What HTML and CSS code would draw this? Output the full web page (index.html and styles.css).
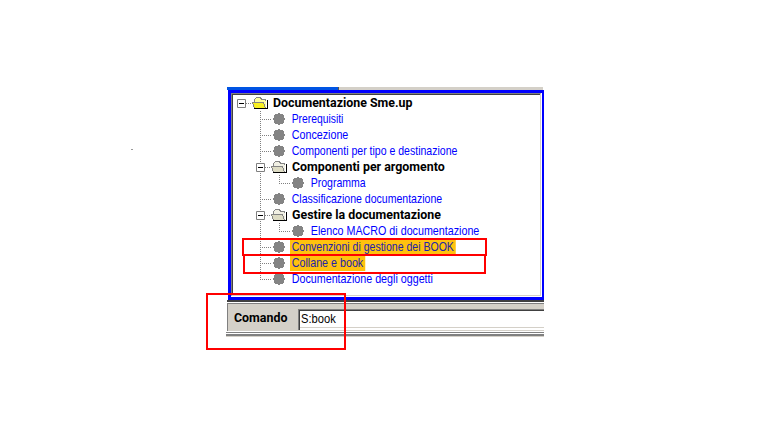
FILE: index.html
```
<!DOCTYPE html>
<html lang="it">
<head>
<meta charset="utf-8">
<title>Documentazione Sme.up</title>
<link rel="stylesheet" href="styles.css">
</head>
<body>
<svg class="defs" width="0" height="0" aria-hidden="true">
  <defs>
    <symbol id="folder-root" viewBox="0 0 16 14">
      <path d="M2 6V3L4 1H8L9 3H14V12H4Z" fill="#ffff9c"/>
      <path d="M0 6H12L14 12H3Z" fill="#f8f020"/>
      <path d="M2.5 6V3.5L4.5 1.5H8.5L9.5 3.5H13.5V5M0 6.5H11.5L13.5 12M.5 7L2.5 12" fill="none" stroke="#848484"/>
      <path d="M2 12.5H16M15 4V13" fill="none" stroke="#000"/>
    </symbol>
    <symbol id="folder" viewBox="0 0 16 14">
      <path d="M2 6V3L4 1H8L9 3H14V12H4Z" fill="#f1f0e4"/>
      <path d="M0 6H12L14 12H3Z" fill="#dedcc4"/>
      <path d="M2.5 6V3.5L4.5 1.5H8.5L9.5 3.5H13.5V5M0 6.5H11.5L13.5 12M.5 7L2.5 12" fill="none" stroke="#848484"/>
      <path d="M2 12.5H16M15 4V13" fill="none" stroke="#000"/>
    </symbol>
    <symbol id="dot" viewBox="0 0 12 12"><path d="M4 1H5V0H7V1H10V2H11V5H12V7H11V10H10V11H7V12H5V11H2V10H1V7H0V5H1V2H2V1Z" fill="#848484"/></symbol>
    <symbol id="minus" viewBox="0 0 9 9"><path d="M.5 .5H8.5V8.5H.5Z" fill="#fff" stroke="#808080"/><path d="M2 4.5H7" stroke="#000"/></symbol>
  </defs>
</svg>
<main class="window">
  <div class="strip"><span class="strip-active"></span></div>
  <section class="frame">
    <ul class="tree">
      <li class="row root"><svg class="minus"><use href="#minus"/></svg><i class="dots"></i><svg class="folder"><use href="#folder-root"/></svg><b>Documentazione Sme.up</b></li>
      <li class="row"><i class="branch"></i><svg class="dot"><use href="#dot"/></svg><span class="tight">Prerequisiti</span></li>
      <li class="row"><i class="branch"></i><svg class="dot"><use href="#dot"/></svg><span>Concezione</span></li>
      <li class="row"><i class="branch"></i><svg class="dot"><use href="#dot"/></svg><span class="long">Componenti per tipo e destinazione</span></li>
      <li class="row group"><svg class="minus"><use href="#minus"/></svg><i class="dots"></i><svg class="folder"><use href="#folder"/></svg><b>Componenti per argomento</b></li>
      <li class="row child"><i class="line"></i><i class="branch end"></i><svg class="dot"><use href="#dot"/></svg><span class="long">Programma</span></li>
      <li class="row"><i class="branch"></i><svg class="dot"><use href="#dot"/></svg><span class="long">Classificazione documentazione</span></li>
      <li class="row group"><svg class="minus"><use href="#minus"/></svg><i class="dots"></i><svg class="folder"><use href="#folder"/></svg><b>Gestire la documentazione</b></li>
      <li class="row child"><i class="line"></i><i class="branch end"></i><svg class="dot"><use href="#dot"/></svg><span>Elenco MACRO di documentazione</span></li>
      <li class="row"><i class="branch"></i><svg class="dot"><use href="#dot"/></svg><span class="marked long">Convenzioni di gestione dei BOOK</span></li>
      <li class="row"><i class="branch"></i><svg class="dot"><use href="#dot"/></svg><span class="marked">Collane e book</span></li>
      <li class="row"><i class="branch end"></i><svg class="dot"><use href="#dot"/></svg><span>Documentazione degli oggetti</span></li>
    </ul>
  </section>
  <div class="frame-shadow"></div>
  <section class="command">
    <label class="command-label">Comando</label>
    <div class="command-input"><span>S:book</span></div>
  </section>
  <div class="footer-edge"></div>
</main>
<div class="callout callout-conventions"></div>
<div class="callout callout-books"></div>
<div class="callout callout-command"></div>
<div class="speck"></div>
</body>
</html>
```
FILE: styles.css
```
* { box-sizing: border-box; }
body { margin: 0; width: 771px; height: 424px; overflow: hidden; background: #fff; color: #000; font: 12.4px/16px "Liberation Sans", sans-serif; }
.defs { position: absolute; }
.window { width: 318px; margin: 87px 0 0 226px; }
.strip { height: 3px; margin: 0 1px; background: #d4d0c8; }
.strip-active { display: block; width: 112px; height: 3px; background: #0054e3; border-right: 1px solid #555; }
.frame { margin-left: 2px; height: 210px; border: 3px solid #00f; border-right-width: 2px; padding: 0 1px 1px 0; }
.tree { margin: 0; padding: 1px 0 0 4px; height: 203px; list-style: none; border: 1px solid #d4d0c8; border-top-color: #808080; border-left-color: #808080; box-shadow: inset 1px 1px #404040; }
.row { display: flex; align-items: center; height: 16px; padding-left: 24px; white-space: nowrap; color: #00f; }
.row > * { flex: none; }
.row b { color: #000; font-family: Roboto, sans-serif; font-weight: 700; font-size: 12.4px; }
.row span { height: 16px; padding: 0 2px; transform: scaleX(.865); transform-origin: 0 0; }
.row .long { transform: scaleX(.85); }
.row .tight { transform: scaleX(.835); }
.row .marked { background: #ffc20e; color: #22a; }
.root { padding-left: 1px; }
.group { padding-left: 20px; background: repeating-linear-gradient(#808080 0 1px, transparent 1px 2px) 24px 0 / 1px 16px no-repeat; }
.minus { width: 9px; height: 9px; }
.folder { width: 16px; height: 14px; margin-right: 5px; shape-rendering: crispEdges; }
.dots { width: 6px; height: 1px; background: repeating-linear-gradient(90deg, #808080 0 1px, transparent 1px 2px); }
.dot { width: 12px; height: 12px; margin-right: 5px; }
.branch { width: 13px; height: 16px; background: repeating-linear-gradient(90deg, #808080 0 1px, transparent 1px 2px) 0 8px / 12px 1px no-repeat, repeating-linear-gradient(#808080 0 1px, transparent 1px 2px) 0 0 / 1px 16px no-repeat; }
.branch.end { background-size: 12px 1px, 1px 8px; }
.line { width: 19px; height: 16px; background: repeating-linear-gradient(#808080 0 1px, transparent 1px 2px) 0 0 / 1px 16px no-repeat; }
.frame-shadow { height: 2px; margin-left: 1px; background: #404040; }
.command { display: flex; height: 28px; margin: 1px 0 0 1px; padding-top: 5px; background: #d4d0c8; border-top: 1px solid #808080; border-left: 1px solid #808080; }
.command-label { width: 70px; padding: 1px 0 0 6px; font-family: Roboto, sans-serif; font-weight: 700; }
.command-input { flex: 1; height: 21px; padding: 0 0 0 2px; background: #fff; border: 1px solid #808080; border-right: 0; border-bottom: 0; box-shadow: inset 1px 1px #404040, inset 0 -2px #fff, inset 0 -3px #d4d0c8; line-height: 18px; }
.command-input span { display: inline-block; transform: scaleX(.9); transform-origin: 0 0; }
.footer-edge { height: 6px; border-top: 1px solid #fff; background: linear-gradient(#808080 0 1px, #fff 1px 2px, #808080 2px 4px, #d4d0c8 4px); }
.callout { position: absolute; border: 2px solid #f00; }
.callout-conventions { left: 242px; top: 238px; width: 245px; height: 18px; }
.callout-books { left: 243px; top: 254px; width: 243px; height: 20px; }
.callout-command { left: 206px; top: 293px; width: 140px; height: 57px; }
.speck { position: absolute; left: 131px; top: 149px; width: 2px; height: 1px; background: #999; }
```
